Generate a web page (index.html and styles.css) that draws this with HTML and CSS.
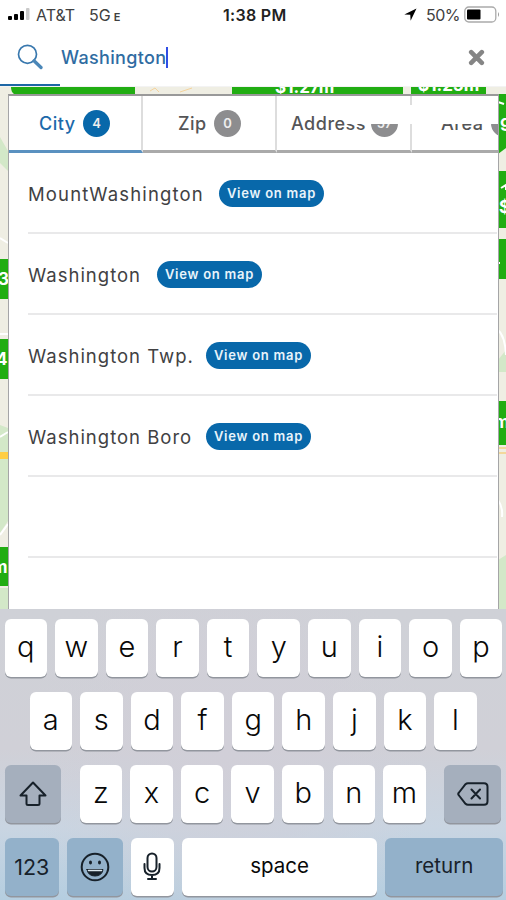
FILE: index.html
```html
<!DOCTYPE html>
<html lang="en">
<head>
<meta charset="utf-8">
<title>Search</title>
<link rel="stylesheet" href="styles.css">
</head>
<body>
<div class="phone">
  <header class="status">
    <svg class="signal" width="22" height="13" viewBox="0 0 22 13"><rect x="0" y="8" width="4" height="4" rx="1"/><rect x="6" y="6" width="4" height="6" rx="1"/><rect x="12" y="3" width="4" height="9" rx="1"/><rect x="18" y="0" width="3.5" height="12" rx="1" fill="#c9c9c9"/></svg>
    <span class="carrier">AT&amp;T</span><span class="network">5G<small>E</small></span>
    <span class="time">1:38 PM</span>
    <svg class="arrow" width="13" height="13" viewBox="0 0 13 13"><path d="M12.5.5.3 6.4l6 .4.3 5.900z"/></svg>
    <span class="percent">50%</span>
    <svg class="battery" width="37" height="17" viewBox="0 0 37 17"><rect x=".8" y="1" width="31" height="15" rx="4" fill="none" stroke="#aaa" stroke-width="1.3"/><rect x="3" y="3.5" width="13.5" height="10" rx="1"/><path d="M34 6q2 2.500 0 5z" fill="#999"/></svg>
  </header>
  <section class="search">
    <svg class="lens" width="26" height="27" viewBox="0 0 26 27"><circle cx="10.500" cy="10.300" r="9" fill="none" stroke="#3978ae" stroke-width="1.700"/><path d="m17 16.800 7 6.700" stroke="#4b87b8" stroke-width="3.300" stroke-linecap="round"/></svg>
    <span class="query">Washington</span><i class="caret"></i>
    <svg class="clear" width="17" height="17" viewBox="0 0 17 17"><path d="m3.200 3.200 10.600 10.600m0-10.600L3.200 13.800" stroke="#858585" stroke-width="4.600" stroke-linecap="round"/></svg>
  </section>
  <main class="content">
    <svg class="map" width="506" height="523" viewBox="0 86 506 523">
      <rect y="86" width="506" height="523" fill="#efeee3"/>
      <g fill="#d3e8c8"><path d="M0 137l8 14v20l-8-8zM0 425l8 3v24H0zM0 459h8v62l-8 12zM0 588h8v21H0zM498 360l8-10v22h-8zM498 560l8-5v54h-8z"/></g>
      <g fill="none" stroke="#fff" stroke-width="2"><path d="M0 238l8 5M0 334h8M0 437l8-5M0 535l8-11M498 330q7 6 8 25M498 500q5 7 4 17"/></g>
      <path d="M0 452h8v7H0z" fill="#ffce43"/><path d="M498 448h8m-8 5h8" stroke="#f3d89c" stroke-width="2"/>
      <path d="M150 91l5-3 4 4M180 92l12-4" fill="none" stroke="#f4d39d"/>
      <g fill="#21ad12"><path d="M11 87h124v7H14q-3-2-3-7zM232 87h171v7H232zM411 86h75v8h-75zM498 94h8v54l-8 6zM498 171h8v57h-8zM498 239h8v40h-8zM498 401h8v44h-8zM0 259h8v40H0zM0 339h8v40H0zM0 547h8v39H0z"/></g>
      <g class="pin-text"><text x="275" y="93">$1.27m</text><text x="418" y="91">$1.25m</text><text x="-2" y="285">3</text><text x="-4" y="365">4</text><text x="-8" y="573">m</text><text x="500" y="131">9</text><text x="499" y="213">$</text><text x="494" y="428">m</text></g>
      <path d="M498 102l6 2M501 188l5-3v5M498 263h2" fill="none" stroke="#fff" stroke-width="2"/>
    </svg>
    <div class="panel">
      <nav class="tabs">
        <div class="tab active"><span class="city">City</span><b class="badge">4</b></div>
        <div class="tab zip"><span>Zip</span><b class="badge">0</b></div>
        <div class="tab address"><span>Address</span><b class="badge">57</b></div>
        <div class="tab area"><span>Area</span><b class="badge"></b></div>
        <i class="mask"></i>
      </nav>
      <ul class="results">
        <li><span class="n1">MountWashington</span><b class="view">View on map</b></li>
        <li><span class="n2">Washington</span><b class="view">View on map</b></li>
        <li><span class="n3">Washington Twp.</span><b class="view">View on map</b></li>
        <li><span class="n4">Washington Boro</span><b class="view">View on map</b></li>
        <li></li>
      </ul>
    </div>
  </main>
  <section class="keyboard">
    <div class="row"><b>q</b><b>w</b><b>e</b><b>r</b><b>t</b><b>y</b><b>u</b><b>i</b><b>o</b><b>p</b></div>
    <div class="row second"><b>a</b><b>s</b><b>d</b><b>f</b><b>g</b><b>h</b><b>j</b><b>k</b><b>l</b></div>
    <div class="row third"><b class="gray shift"><svg width="28" height="26" viewBox="0 0 28 26"><path d="M14 1.500 1.500 14.500H7.500v8q0 1.500 1.500 1.500h10q1.500 0 1.500-1.500v-8h6z"/></svg></b><b>z</b><b>x</b><b>c</b><b>v</b><b>b</b><b>n</b><b>m</b><b class="gray delete"><svg width="32" height="24" viewBox="0 0 32 24"><path d="M11 1.200h16q3.500 0 3.500 3.500v14.600q0 3.500-3.500 3.500H11q-1.500 0-2.500-1L2 13.500q-1.500-1.500 0-3l6.500-8.300q1-1 2.500-1zM14.500 7.500l8.500 9m0-9-8.500 9"/></svg></b></div>
    <div class="row bottom"><b class="blue numbers">123</b><b class="blue emoji"><svg width="30" height="30" viewBox="0 0 30 30"><circle cx="15" cy="15" r="13.300"/><path d="M7 17.500h16q-1 6.500-8 6.500t-8-6.500z" fill="#17212a" stroke-width="1"/><path d="M8.500 18.500h13" stroke="#dce8ef" stroke-width="1.500"/><ellipse cx="10.500" cy="10.500" rx=".5" ry="1" fill="#17212a"/><ellipse cx="19.500" cy="10.500" rx=".5" ry="1" fill="#17212a"/></svg></b><b class="mic"><svg width="18" height="29" viewBox="0 0 18 29"><rect x="4.500" y="1.500" width="9" height="18" rx="4.500"/><path d="M1.500 12v4q0 7 7.500 7t7.500-7v-4M9 23v4m-4 0h8"/></svg></b><b class="space">space</b><b class="blue return">return</b></div>
  </section>
</div>
</body>
</html>
```
FILE: styles.css
```css
* { box-sizing: border-box; }
body { margin: 0; font-family: "Inter", sans-serif; }
svg { display: block; flex: none; }
.phone { width: 506px; height: 900px; overflow: hidden; background: #fff; display: flex; flex-direction: column; }
.status { height: 29px; display: flex; align-items: center; padding-left: 8px; font-size: 16px; color: #404040; white-space: nowrap; }
.carrier { margin-left: 6px; width: 53px; }
.network { width: 134px; }
.network small { font-size: 11px; font-weight: 600; margin-left: 3px; }
.time { font-size: 16px; font-weight: 600; width: 66px; color: #222; letter-spacing: .3px; }
.arrow { margin-left: 115px; }
.percent { margin-left: 9px; width: 38px; letter-spacing: -.5px; }
.search { position: relative; z-index: 1; height: 58px; display: flex; align-items: center; padding-left: 17px; border-bottom: 1px solid #f3f3f3; background: linear-gradient(#1d67a5, #1d67a5) 0 100% / 60px 2px no-repeat; }
.query { width: 105px; margin-left: 18px; font-size: 18px; font-weight: 500; letter-spacing: .35px; color: #2f6ca2; white-space: nowrap; }
.caret { width: 2px; height: 21px; background: #304ee5; }
.clear { margin-left: 300px; }
.content { height: 522px; position: relative; padding: 7px 7px 0 8px; }
.map { position: absolute; left: 0; top: -1px; }
.pin-text { fill: #fff; font: 700 17px Inter, sans-serif; }
.panel { position: relative; height: 515px; background: #fff; border: 1px solid #a5a5a7; border-top: 2px solid #999; border-bottom: 0; overflow: hidden; }
.tabs { position: relative; height: 57px; display: grid; grid-template-columns: 134px 134px 135px 134px; }
.tab { display: flex; align-items: center; border-right: 2px solid #ddd; border-bottom: 3px solid #aaa; font-size: 18px; font-weight: 500; letter-spacing: .5px; color: #555557; padding-left: 35px; white-space: nowrap; }
.tab.active { padding-left: 30px; color: #1c69aa; border-bottom-color: #5a91c0; }
.tab .badge { width: 27px; height: 27px; border-radius: 50%; background: #8d8d8f; color: #eee; display: flex; align-items: center; justify-content: center; font-size: 13px; font-weight: 600; flex: none; letter-spacing: 0; }
.tab.active span { width: 44px; }
.tab.active .badge { background: #0868aa; }
.tab.zip span { width: 36px; }
.tab.address { padding-left: 14px; }
.tab.address span { width: 80px; }
.tab.area { padding-left: 29px; }
.tab.area span { width: 50px; }
.mask { position: absolute; left: 336px; top: 9px; width: 155px; height: 19px; background: #fff; }
.results { list-style: none; margin: 0; padding: 0 1px 0 19px; }
.results li { height: 81px; display: flex; align-items: center; border-bottom: 2px solid #e9e9ea; font-size: 18.500px; font-weight: 400; letter-spacing: 1px; color: #414143; white-space: nowrap; padding-top: 1px; }
.results span { flex: none; padding-top: 1px; }
.n1 { width: 191px; letter-spacing: 1.150px; }
.n2 { width: 129px; }
.n3, .n4 { width: 178px; }
.view { width: 105px; height: 27px; border-radius: 14px; background: #0868aa; color: #e9f4fb; display: flex; align-items: center; justify-content: center; font-size: 13px; font-weight: 600; letter-spacing: .75px; }
.keyboard { height: 291px; padding: 10px 4px 4px 4.500px; background: radial-gradient(circle at 45% 48%, #d1cfd8, transparent 65%), linear-gradient(#cfd1d7 0, #d0d0d7 48%, #c9d5e2 75%, #b5cee0); display: flex; flex-direction: column; gap: 15.500px; }
.row { display: flex; gap: 8.100px; height: 57.500px; }
.row b { width: 42.500px; height: 57.500px; flex: none; border-radius: 6px; background: #fff; box-shadow: 0 1.500px 0 #92969e; font-size: 29px; font-weight: 300; display: flex; align-items: center; justify-content: center; padding-bottom: 3px; color: #080808; }
.second { padding-left: 25px; }
.row svg { fill: none; stroke: #17212a; stroke-width: 2; stroke-linejoin: round; stroke-linecap: round; }
.row .gray { width: 56.500px; background: #a5afbd; padding: 0; }
.shift { margin-right: 10.500px; }
.delete { margin-left: 10.500px; }
.row .blue { background: #93b1ca; color: #17212a; }
.row .numbers { width: 54.500px; font-size: 21.500px; font-weight: 400; padding: 0; }
.row .emoji { width: 55.500px; padding: 0; }
.row .mic { width: 43px; padding: 0; }
.row .space { width: 195.500px; font-size: 20.500px; font-weight: 400; }
.row .return { width: 117.500px; font-size: 20.500px; font-weight: 400; }
```
